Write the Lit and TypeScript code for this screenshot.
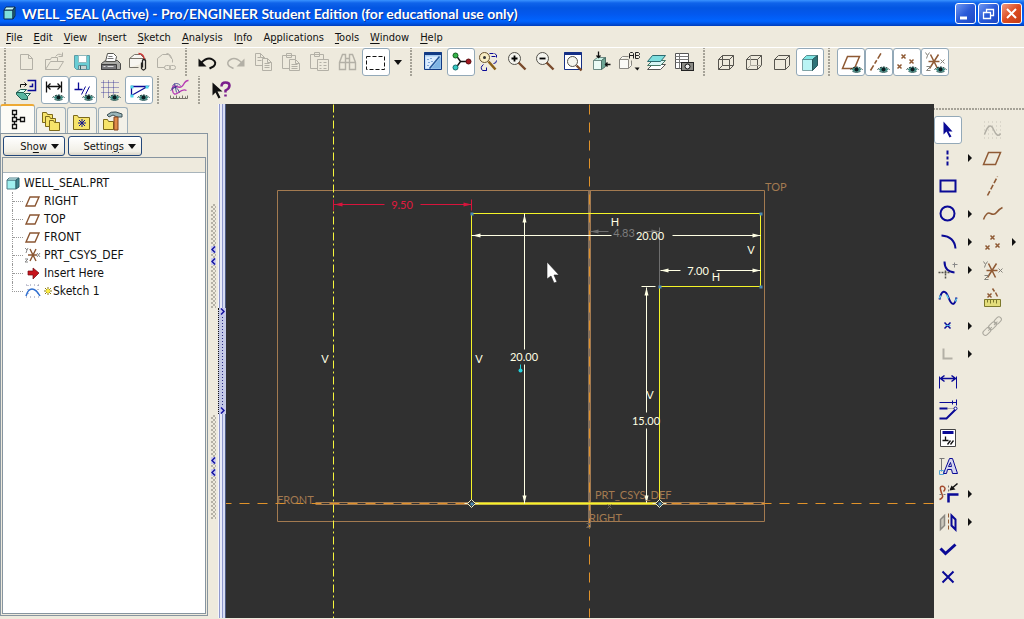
import { LitElement, html, svg, css } from "lit";
import type { TemplateResult } from "lit";
import { customElement, property } from "lit/decorators.js";
import { classMap } from "lit/directives/class-map.js";

const GREY = "#b3b0a6";
const NAVY = "#0a0a96";
const BROWN = "#8f5a34";

type Art = TemplateResult;

/* ---------- shared drawing pieces, all on a 28 x 28 grid ---------- */

const eye = (x = 12, y = 20): Art => svg`
  <g transform="translate(${x} ${y})">
    <path d="M0 0 Q5-5 10 0 Q5 5 0 0Z" fill="#3f8f86" stroke="none"/>
    <path d="M-1 0 Q5-5 11 0" stroke="#10302e" fill="none" stroke-dasharray="2 1"/>
    <circle cx="5" cy="0" r="2" fill="#0d1c20" stroke="none"/>
    <path d="M1 2 Q5 4 9 2" stroke="#2a5b58" fill="none"/>
  </g>`;

const page = (x: number, y: number, w: number, h: number, c: string, fill = "none"): Art => svg`
  <path d="M${x} ${y}h${w - 4}l4 4v${h - 4}h${-w}z" fill=${fill} stroke=${c}/>
  <path d="M${x + w - 4} ${y}v4h4" fill="none" stroke=${c}/>`;

const lens = (inner: Art): Art => svg`
  <circle cx="11" cy="10" r="6" fill="#f4f4ee" stroke="#55534c"/>
  <path d="M15 14l7 7" stroke="#7a4a2c" stroke-width="2.4"/>
  ${inner}`;

const cube = (extra: Art, c = "#57554f"): Art => svg`
  <path d="M6 11h11v10h-11zM6 11l4-4h11v10l-4 4M17 11l4-4" fill="none" stroke=${c}/>${extra}`;

const plane = (c = BROWN): Art => svg`<path d="M5 20L10 8H22L17 20Z" fill="none" stroke=${c} stroke-width="1.5"/>`;

const cross = (x: number, y: number, c = BROWN, r = 2): Art =>
  svg`<path d="M${x - r} ${y - r}l${2 * r} ${2 * r}M${x + r} ${y - r}l${-2 * r} ${2 * r}" stroke=${c} stroke-width="1.5"/>`;

const csys = (): Art => svg`
  <path d="M7 13H18M9 6L16 20M17 6L8 20" stroke=${BROWN} stroke-width="1.5"/>
  <path d="M4 4l2 3 2-3M6 7l-1 3M5 18h4l-4 4h4M19 11l4 4M23 11l-4 4" stroke="#85837c" fill="none"/>`;

const art: Record<string, Art> = {
  blank: svg`${page(7, 6, 12, 15, GREY)}`,
  open: svg`<path d="M4 21V11h5l1-2h6v4M4 21l5-8h13l-5 8zM14 8q3-4 7-1M21 4v4h-4" fill="none" stroke=${GREY}/>`,
  save: svg`<path d="M5 7h15v14h-13l-2-2z" fill="#69cdd4" stroke="#5c9aa4"/><path d="M9 7h8v7h-8z" fill="#fff" stroke="#8fb9bd"/><path d="M9 17h8v4h-8z" fill="#c9d3d2" stroke="#5c8d96"/><path d="M11 17v4" stroke="#33666e"/>`,
  print: svg`<path d="M4 15l4-3h12l3 3v6H4z" fill="#a9a9a5" stroke="#4a4a48"/><path d="M8 13l2-8h6l3 3-1 5z" fill="#fff" stroke="#55554f"/><path d="M11 8h4M10 10h6" stroke="#777"/><path d="M4 16h15v5H4z" fill="#77777a" stroke="#3c3c3c"/><path d="M6 18h2M10 18h6" stroke="#ddd"/>`,
  mail: svg`<path d="M4 19V10l5-4h6l5 5v3M4 10h16M4 19h9" fill="#f6f5f0" stroke="#77746b"/><path d="M13 5q5 0 6 6" stroke="#c33" fill="none" stroke-width="1.5"/><path d="M16 14v6q2 3 4 0v-8q-2-2-3 0v7" fill="none" stroke="#222" stroke-width="1.3"/>`,
  link: svg`<path d="M4 19v-9l5-4h6l4 5v3M4 19h7M13 5q4 0 5 5" fill="none" stroke=${GREY}/><rect x="11" y="17" width="6" height="4" rx="2" fill="none" stroke=${GREY}/><rect x="16" y="17" width="6" height="4" rx="2" fill="none" stroke=${GREY}/>`,
  undo: svg`<path d="M4 10v8h8z" fill="#111" stroke="none"/><path d="M7 14q6-6 11-3q5 3 1 7l-4 2" stroke="#111" fill="none" stroke-width="2"/>`,
  redo: svg`<path d="M22 10v8h-8z" fill=${GREY} stroke="none"/><path d="M19 14q-6-6-11-3q-5 3-1 7l4 2" stroke=${GREY} fill="none" stroke-width="1.5"/>`,
  copy: svg`${page(5, 5, 9, 12, GREY)}${page(12, 10, 9, 12, GREY, "#eeeadd")}<path d="M7 9h3M7 12h4M14 15h5M14 17h5M14 19h5" stroke=${GREY}/>`,
  paste: svg`<path d="M4 7h13v4M4 7v13h7M8 5h5v4h-5z" fill="none" stroke=${GREY}/>${page(11, 11, 10, 11, GREY)}<path d="M13 16h6M13 18h6M13 20h6" stroke=${GREY}/>`,
  special: svg`<path d="M4 6h13v5M4 6v14h7M8 4h5v4h-5z" fill="none" stroke=${GREY}/><path d="M11 11h11v11h-11z" fill="none" stroke=${GREY}/><path d="M13 14h2M17 14h3M13 17h2M17 17h3M13 20h2M17 20h3" stroke=${GREY}/>`,
  find: svg`<path d="M5 21v-7l3-8h3v15zM15 21V6h3l3 8v7zM11 10h4v4h-4M5 14h6M15 14h6" fill="none" stroke=${GREY} stroke-width="1.4"/>`,
  select: svg`<path d="M4 8h18v13H4z" fill="none" stroke="#111" stroke-dasharray="4 2"/>`,
  repaint: svg`<path d="M5 4h17v17H5z" fill="#a9cdf1" stroke="#123a84"/><path d="M6 8h15L10 20H6z" fill="#dcedff"/><path d="M21 9l-9 11h9z" fill="#7fb4e4"/><path d="M5 5h17" stroke="#123a84" stroke-width="3"/><path d="M20 8L10 20" stroke="#255799" stroke-width="1.5"/><path d="M8 11h1M11 10h1M9 14h1M12 13h1M8 17h1" stroke="#2b62ae"/>`,
  spin: svg`<path d="M8 6l5 7M8 20l5-7H20" stroke="#111" fill="none" stroke-width="1.4"/><circle cx="8" cy="7" r="2.5" fill="#36b54a" stroke="#145c20"/><circle cx="8" cy="19" r="2.5" fill="#35c8c4" stroke="#146c6a"/><circle cx="21" cy="13" r="2.5" fill="#a3161f" stroke="#5a0c10"/>`,
  orient: svg`<circle cx="9" cy="9" r="5" fill="#f7edc4" stroke="#6b5430"/><path d="M13 13l7 8" stroke="#8a6018" stroke-width="2.5"/><circle cx="9" cy="9" r="1.5" fill="#333" stroke="none"/><path d="M14 5h4M16 8h4M19 5q3 1 2 4M21 12q0 3-3 3M8 16q-4 3-1 6h4M11 19v3h-3" stroke=${NAVY} fill="none"/>`,
  zoomin: lens(svg`<path d="M8 10h6M11 7v6" stroke="#000" stroke-width="1.8"/>`),
  zoomout: lens(svg`<path d="M8 10h6" stroke="#000" stroke-width="1.8"/>`),
  refit: svg`<path d="M5 4h17v17H5z" fill="#fff" stroke="#152f86"/><path d="M5 5h17" stroke="#152f86" stroke-width="3"/><circle cx="13" cy="13" r="5" fill="#f5f5ee" stroke="#55534c"/><path d="M17 17l5 5" stroke="#7a4a2c" stroke-width="2.4"/>`,
  view: svg`<path d="M6 12h8v9H6z" fill="#eafaf5" stroke="#6d8a84"/><path d="M6 12l4-3h8l-4 3z" fill="#c6efe2" stroke="#6d8a84"/><path d="M14 12l4-3v9l-4 3z" fill="#6ea695" stroke="#4d6f67"/><path d="M11 3v6M9 7l2 2 2-2M23 16h-5M20 14l-2 2 2 2" stroke="#111" fill="none" stroke-width="1.3"/>`,
  named: svg`<path d="M4 11h9v9H4zM4 11l3-3h6M13 20l3-3v-5" fill="#fafaf6" stroke="#8a8882"/><path d="M14 10V5l1-1h2l1 1v5M14 7h4M20 4v6h3l1-1v-1l-1-1h-3M20 4h3l1 1v1l-1 1" stroke="#222" fill="none"/><path d="M19 19h5l-2 3z" fill="#111" stroke="none"/>`,
  layers: svg`<path d="M4 21l5-5h13l-5 5z" fill="#fff" stroke="#555"/><path d="M4 17l5-5h13l-5 5z" fill="#d7f5f5" stroke="#476"/><path d="M4 13l5-6h13l-5 6z" fill="#7fdede" stroke="#2d6a70"/>`,
  camera: svg`<path d="M4 5h13v15H4z" fill="#fff" stroke="#555"/><path d="M4 8h13M4 11h13M4 14h13M8 5v15" stroke="#777"/><rect x="10" y="14" width="12" height="8" fill="#8b8b86" stroke="#222"/><circle cx="16" cy="18" r="2.5" fill="#eee" stroke="#111"/>`,
  wire: cube(svg`<path d="M6 21l4-4h11M10 17V7" stroke="#57554f" fill="none"/>`),
  hidden: cube(svg`<path d="M6 21l4-4h11M10 17V7" stroke="#aaa79d" fill="none"/>`),
  nohidden: cube(svg``),
  shaded: svg`<path d="M6 11h10v11H6z" fill="#b9f4f4" stroke="#7fa3a5"/><path d="M6 11l4-4h11l-5 4z" fill="#7fe6e4" stroke="#5a8f92"/><path d="M16 11l5-4v10l-5 5z" fill="#2d7478" stroke="#28575a"/>`,
  dplane: svg`${plane()}${eye(14, 21)}`,
  daxis: svg`<path d="M5 22L16 4" stroke=${BROWN} stroke-width="1.6" stroke-dasharray="6 2 4 2"/>${eye(13, 21)}`,
  dpoint: svg`${cross(10, 8)}${cross(18, 13)}${cross(6, 18)}${eye(14, 21)}`,
  dcsys: svg`${csys()}${eye(14, 21)}`,
  sketchview: svg`<path d="M14 4h8v10h-8M16 10h3V7" fill="none" stroke=${NAVY} stroke-width="1.5"/><path d="M7 11V8h6M11 6l2 2-2 2" stroke="#111" fill="none"/><path d="M3 16l4-3h6l-3 3zM8 20l4-3h5l-3 3z" fill="#d8fff4" stroke="#1e5c50"/><path d="M3 16h7l4 4v3H8l-5-5z" fill="#57b59f" stroke="#1e5c50"/>`,
  dims: svg`<path d="M5 5v11M20 5v11M5 10h15M9 7l-3 3 3 3M16 7l3 3-3 3" stroke="#111" fill="none" stroke-width="1.3"/>${eye(12, 21)}`,
  constr: svg`<path d="M5 13h8M9 6v7" stroke=${NAVY} stroke-width="1.3"/><path d="M12 18l4-8M16 18l4-8" stroke=${NAVY}/>${eye(14, 21)}`,
  grid: svg`<path d="M6 4v17M11 4v17M16 4v17M4 6h17M4 11h17M4 16h17" stroke="#2a2a92" stroke-dasharray="1 1" stroke-width=".8"/>${eye(12, 21)}`,
  vertex: svg`<path d="M6 10H22L6 19zM6 10v9" fill="none" stroke=${NAVY} stroke-width="1.3"/><path d="M5 9h3v3H5zM20 9h3v3h-3zM5 18h3v3H5z" fill="#4fd5ea" stroke="none"/>${eye(13, 21)}`,
  curve: svg`<path d="M22 4q-3 0-5 4t-7 2-4 4 6 2 8-2" stroke="#b63cb4" fill="none" stroke-width="1.4"/><path d="M6 9q4-4 8 0M5 12q5-4 8 4M8 7l2 9M4 14l7-5" stroke="#32318c" stroke-width=".8"/><path d="M4 22h17M4 22v-3M7 22v-2M10 22v-3M13 22v-2M16 22v-3M19 22v-2M21 22v-3" stroke="#77746b"/>`,
  help: svg`<path d="M5 6v13l3-3 3 6 2-1-3-6h5z" fill="#111" stroke="none"/><path d="M14 10q0-4 4-4t4 3q0 3-4 5v2M18 18v2" fill="none" stroke="#7a1d8c" stroke-width="2.5"/>`,

  arrow: svg`<path d="M9 5v13l3-3 3 6 2-1-3-5h4z" fill=${NAVY} stroke="none"/>`,
  line: svg`<path d="M13 6v17" stroke=${NAVY} stroke-width="2" stroke-dasharray="4 2 3 2"/>`,
  rect: svg`<path d="M6 8h15v11H6z" stroke=${NAVY} fill="none" stroke-width="2"/>`,
  circle: svg`<circle cx="13" cy="13" r="7" stroke=${NAVY} fill="none" stroke-width="2"/>`,
  arc: svg`<path d="M7 7q13 1 14 13" stroke=${NAVY} fill="none" stroke-width="2"/>`,
  fillet: svg`<path d="M10 5q0 10 10 11" stroke=${NAVY} fill="none" stroke-width="2"/><path d="M4 16h12M11 14v8" stroke="#55534c" stroke-width="1.5" stroke-dasharray="2 1"/><path d="M18 8h5M20 6v5" stroke="#888"/>`,
  spline: svg`<path d="M5 15C7 5 11 5 14 13S20 22 22 13" stroke=${NAVY} fill="none" stroke-width="2"/><path d="M5 14l1-3M12 10l2 4M21 17l1-3" stroke="#5fd5ee" stroke-width="1.5"/>`,
  point: svg`${cross(13, 13, NAVY, 3)}<path d="M11 13h5" stroke="#4ab6e8"/>`,
  edge: svg`<path d="M9 8v10h9" stroke=${GREY} fill="none" stroke-width="2"/>`,
  dim: svg`<path d="M5 8v12M22 8v12" stroke=${NAVY}/><path d="M6 10h15M10 7l-4 3 4 3M17 7l4 3-4 3" stroke=${NAVY} fill="none" stroke-width="1.5"/>`,
  modify: svg`<path d="M5 6h17M22 3v6M18 4v4" stroke=${NAVY}/><path d="M5 12h8M5 22h7l9-9" stroke=${NAVY} fill="none" stroke-width="2"/><path d="M13 12h7" stroke="#777" stroke-dasharray="1 1"/><circle cx="21" cy="12" r="1.5" fill="#fff" stroke=${NAVY}/>`,
  impose: svg`<path d="M6 5h15v17H6z" fill="#fff" stroke="#444"/><path d="M8 8h11" stroke=${NAVY} stroke-width="3"/><path d="M8 16h6M11 12v4M13 20l3-4M16 20l3-4" stroke="#111" stroke-width="1.3"/>`,
  text: svg`<path d="M5 6h5M7 6v13" stroke="#777"/><path d="M5 18h4v4H5z" stroke="#55a5d5" fill="none"/><path d="M9 21l6-15h3l5 15h-5l-1-4h-4l-1 4zM14 14h3l-1-4z" fill="#d5d5ee" stroke=${NAVY}/>`,
  trim: svg`<path d="M9 6q-4-1-3 3t2 6-3 4M9 6q3 2 0 5" stroke="#a34a2d" fill="none" stroke-width="1.5"/><path d="M14 22v-8h10" stroke=${NAVY} fill="none" stroke-width="2.5"/><path d="M5 14h8M14 5v7" stroke="#777" stroke-dasharray="2 2"/><path d="M23 3l-7 6" stroke="#111" stroke-width="1.5"/><path d="M15 10l2-5 4 4z" fill="#111" stroke="none"/>`,
  mirror: svg`<path d="M6 11l4-4v10l-4 4z" stroke="#8a8882" fill="#ccc9bd" stroke-width="1.5"/><path d="M17 7l4 4v10l-4-4z" fill="none" stroke=${NAVY} stroke-width="2"/><path d="M14 5v18" stroke=${BROWN} stroke-dasharray="4 2"/>`,
  done: svg`<path d="M6 12l5 5L21 8" stroke=${NAVY} fill="none" stroke-width="3"/>`,
  quit: svg`<path d="M8 7l11 11M19 7L8 18" stroke=${NAVY} stroke-width="2"/>`,

  sketch: svg`<path d="M6 5v17M10 5v17M14 5v17M18 5v17M22 5v17" stroke="#c9c5b8" stroke-dasharray="1 3"/><path d="M6 18q5-14 9-5t7 4" stroke=${GREY} fill="none" stroke-width="1.5"/>`,
  rplane: plane(),
  raxis: svg`<path d="M9 23L19 4" stroke=${BROWN} stroke-width="1.6" stroke-dasharray="5 2"/>`,
  rcurve: svg`<path d="M5 19q3-8 7-6t6-1 6-5" stroke=${BROWN} fill="none" stroke-width="1.5"/>`,
  rpoint: svg`${cross(14, 9)}${cross(19, 17)}${cross(9, 19)}`,
  rcsys: svg`<g transform="translate(1 1)">${csys()}</g>`,
  ranalysis: svg`<path d="M6 15h16v7H6z" fill="#e3dd7b" stroke="#7c782c"/><path d="M9 15v3M12 15v4M15 15v3M18 15v4" stroke="#7c782c"/>${cross(11, 11)}<path d="M14 4l2 3M17 8l2 4" stroke=${BROWN} stroke-width="1.5"/>`,
  rchain: svg`<g fill="none" stroke="#aba89e" transform="rotate(-45 14 14)"><rect x="2" y="11" width="9" height="5" rx="2.5"/><rect x="10" y="11" width="9" height="5" rx="2.5"/><rect x="18" y="11" width="8" height="5" rx="2.5"/><path d="M8 14h5M16 14h5"/></g>`,
};

const glyph = (a: Art) => html`<svg class="glyph" viewBox="0 0 28 28" aria-hidden="true"><g transform="translate(.5 .5)">${a}</g></svg>`;

/* ---------- tool button ---------- */

@customElement("tool-button")
class ToolButton extends LitElement {
  @property() icon = "blank";
  @property() label = "";
  @property({ type: Boolean }) on = false;

  static styles = css`
    :host { display: block; flex: none; }
    .btn { display: block; box-sizing: border-box; width: 28px; height: 28px; padding: 0; border: 1px solid transparent; border-radius: 3px; background: none; }
    .on { background: #fff; border-color: #93a9b8; }
    .glyph { display: block; width: 28px; height: 28px; margin: -1px; fill: none; }
  `;

  render() {
    return html`<button type="button" class=${classMap({ btn: true, on: this.on })} aria-label=${this.label} aria-pressed=${this.on}>${glyph(art[this.icon])}</button>`;
  }
}

/* ---------- drawing area ---------- */

@customElement("sketch-canvas")
class SketchCanvas extends LitElement {
  static styles = css`
    :host { display: block; flex: 1; min-width: 0; background: #303030; overflow: hidden; }
    .view { display: block; width: 100%; height: 100%; fill: none; stroke-width: 1; }
    .datum { stroke: #a37a50; }
    .axis { stroke: #e0922a; stroke-dasharray: 10 8; }
    .center { stroke: #f6f63c; stroke-dasharray: 8 3 2 3; }
    .geom { stroke: #f4f428; }
    .dim { stroke: #ffffe4; }
    .weak { stroke: #6e6e6e; }
    .sel { stroke: #d8143c; }
    .txt { font: 11px Lato, "Liberation Sans", sans-serif; fill: #ffffe4; stroke: none; }
    .tdatum { fill: #a37a50; }
    .tweak { fill: #7c7c7c; }
    .tsel { fill: #e0183f; }
    .mid { text-anchor: middle; }
  `;

  private tip(x: number, y: number, a: number, c: string) {
    return svg`<g transform="translate(${x} ${y}) rotate(${a})"><path d="M0 0L8-2V2Z" fill=${c} stroke="none"/></g>`;
  }

  render() {
    const W = "#ffffe4", R = "#d8143c", G = "#6e6e6e";
    return html`
      <svg class="view" viewBox="226 104 708 514" preserveAspectRatio="xMidYMid slice" role="img" aria-label="Sketch">
        <g transform="translate(.5 .5)">
          <path class="datum" d="M277 190H764V521H277Z"/>
          <path d="M589 190V527" stroke="#85705c" stroke-width="3"/>
          <path class="datum" d="M590 190V521M315 504H764M315 502H764"/>
          <path class="axis" d="M589 122V617M589 104V114"/>
          <path class="axis" d="M221 503H934"/>
          <path class="center" d="M333 104V618"/>

          <path class="geom" d="M471 503V213H760V286H659V503"/>
          <path class="geom" d="M471 503H659" stroke-width="2"/>

          <path class="sel" d="M333 204H384M420 204H471M333 199V210M471 199V210"/>
          ${this.tip(334, 204, 0, R)}${this.tip(471, 204, 180, R)}

          <path class="weak" d="M590 231H608M643 231H659M659 227V286"/>
          ${this.tip(590, 231, 0, G)}${this.tip(659, 231, 180, G)}

          <path class="dim" d="M471 235H611M672 235H760M524 213V349M524 364V503M660 270H680M716 270H760M646 287V412M646 428V502M641 286H655"/>
          ${this.tip(472, 235, 0, W)}${this.tip(760, 235, 180, W)}
          ${this.tip(524, 214, 90, W)}${this.tip(524, 503, 270, W)}
          ${this.tip(660, 270, 0, W)}${this.tip(760, 270, 180, W)}
          ${this.tip(646, 287, 90, W)}${this.tip(646, 503, 270, W)}

          <g fill="#303030" stroke="#f2f2c8">
            <path d="M471 499l4 4-4 4-4-4zM659 499l4 4-4 4-4-4z"/>
            <path d="M464 503h3M475 503h3M652 503h3M663 503h3"/>
          </g>
          <g fill="#4c8ab4">
            <path d="M470 212h3v3h-3zM759 212h3v3h-3zM759 285h3v3h-3zM658 285h3v3h-3zM470 502h3v3h-3zM658 502h3v3h-3z"/>
          </g>
          <path d="M520 364V370" stroke="#22d0dc"/><circle cx="520" cy="370" r="2" fill="#22d0dc"/>
          <path d="M586 523h4l-4 4h4M607 504l4 4M611 504l-4 4" stroke="#6a6258"/>
        </g>

        <text class="txt tsel mid" x="402" y="209">9.50</text>
        <text class="txt tweak mid" x="624" y="237">4.83</text>
        <text class="txt mid" x="650" y="240">20.00</text>
        <text class="txt mid" x="524" y="361">20.00</text>
        <text class="txt mid" x="698" y="275">7.00</text>
        <text class="txt mid" x="646" y="425">15.00</text>
        <text class="txt mid" x="615" y="226">H</text>
        <text class="txt mid" x="716" y="281">H</text>
        <text class="txt mid" x="751" y="254">V</text>
        <text class="txt mid" x="479" y="363">V</text>
        <text class="txt mid" x="325" y="363">V</text>
        <text class="txt mid" x="650" y="399">V</text>
        <text class="txt tdatum" x="765" y="191">TOP</text>
        <text class="txt tdatum" x="277" y="504">FRONT</text>
        <text class="txt tdatum" x="595" y="499">PRT_CSYS_DEF</text>
        <text class="txt tdatum" x="589" y="522">RIGHT</text>

        <path d="M547 262V279L551 276L554 283L557 282L554 275H559Z" fill="#fff" stroke="#222" stroke-width=".6"/>
      </svg>`;
  }
}

/* ---------- model tree panel ---------- */

@customElement("model-tree")
class ModelTree extends LitElement {
  static styles = css`
    :host { display: flex; flex-direction: column; flex: none; width: 208px; padding-bottom: 2px; box-sizing: border-box; font: 12px "DejaVu Sans Condensed", "DejaVu Sans", sans-serif; font-stretch: condensed; color: #111; }
    .tabs { display: flex; align-items: flex-end; gap: 1px; height: 29px; }
    .tab { box-sizing: border-box; width: 30px; height: 26px; padding: 0; border: 1px solid #9fb0bb; border-bottom: 0; border-radius: 3px 3px 0 0; background: #f3f1e8; display: grid; place-items: center; }
    .current { width: 35px; height: 29px; background: #fcfbf6; border-top: 2px solid #eda934; }
    .pic { display: block; width: 22px; height: 22px; fill: none; }
    .panel { flex: 1; min-height: 0; display: flex; flex-direction: column; gap: 1px; border: 1px solid #8795a0; padding: 2px 1px 1px; }
    .bar { display: flex; gap: 3px; padding-left: 1px; }
    .menu { box-sizing: border-box; height: 20px; width: 62px; padding: 0 5px 0 0; display: flex; align-items: center; justify-content: flex-end; gap: 4px; border: 1px solid #24487a; border-radius: 3px; background: linear-gradient(#fff, #f1efe6 80%, #d9d5c8); font: inherit; font-size: 11px; color: inherit; }
    .wide { width: 74px; }
    .caret { width: 0; height: 0; border: 4px solid transparent; border-top: 5px solid #111; border-bottom: 0; }
    .box { flex: 1; min-height: 0; display: flex; flex-direction: column; border: 1px solid #8795a0; background: #fff; }
    .head { flex: none; height: 14px; background: #eeeadd; border-bottom: 1px solid #a8b4bb; }
    .list { list-style: none; margin: 0; padding: 1px 0 0 2px; }
    .item { display: flex; align-items: center; height: 18px; gap: 3px; }
    .ico { flex: none; display: block; width: 16px; height: 16px; fill: none; }
    .sub { list-style: none; margin: 0; padding: 0 0 0 7px; }
    .child { display: flex; align-items: stretch; height: 18px; }
    .branch { display: block; flex: none; width: 10px; height: 9px; border-bottom: 1px dotted #999; }
    .stem { flex: none; width: 12px; border-left: 1px dotted #999; }
    .last { border-left-color: transparent; }
    .last .branch { border-left: 1px dotted #999; margin-left: -1px; }
    .node { display: flex; align-items: center; gap: 3px; }
    .star { flex: none; width: 8px; height: 8px; margin-right: -2px; }
    u { text-underline-offset: 2px; }
  `;

  private plane = svg`<path d="M1 13L5 4H14L10 13Z" stroke="#8a5632" stroke-width="1.4"/>`;

  render() {
    const folder = (x: number, y: number, w = 10, h = 8) =>
      svg`<path d="M${x} ${y}h4l1 2h${w - 5}v${h}h${-w}z" fill="#f7e46a" stroke="#7d6a1a"/>`;
    const rows: [Art, string, boolean][] = [
      [this.plane, "RIGHT", false],
      [this.plane, "TOP", false],
      [this.plane, "FRONT", false],
      [svg`<path d="M3 8H12M5 2L11 14M11 2L5 14" stroke="#8a5632" stroke-width="1.4"/><path d="M0 1l2 2 1-2M2 3l-1 3M0 12h3l-3 3h3M12 6l3 4M15 6l-3 4" stroke="#888"/>`, "PRT_CSYS_DEF", false],
      [svg`<path d="M3 6h5V3l6 5-6 6v-4H3z" fill="#c8141c" stroke="#6d0a10" stroke-width=".7"/>`, "Insert Here", false],
      [svg`<path d="M1 2h14M1 14h14M3 2v12M13 2v12" stroke="#8a8aa5" stroke-dasharray="1 3"/><path d="M1 13q2-7 6-7t8 7" stroke="#2f6fd0" stroke-width="1.5"/>`, "Sketch 1", true],
    ];
    return html`
      <div class="tabs" role="tablist">
        <button class="tab current" role="tab" aria-selected="true" aria-label="Model Tree"><svg class="pic" viewBox="0 0 22 22"><path d="M6 3h4v4H6zM6 10h4v4H6zM6 17h4v4H6zM14 10h4v4h-4zM8 7v3M8 14v3M10 12h4" stroke="#111" stroke-width="1.3" transform="translate(-.5 -1.5)"/></svg></button>
        <button class="tab" role="tab" aria-label="Folder Browser"><svg class="pic" viewBox="0 0 22 22">${folder(2.5, 2.5)}${folder(5.5, 6.5)}${folder(9.5, 10.5)}</svg></button>
        <button class="tab" role="tab" aria-label="Favorites"><svg class="pic" viewBox="0 0 22 22">${folder(2.5, 5.5, 16, 12)}<path d="M7 13h8M11 9v8M8 10l6 6M14 10l-6 6" stroke="#14148c"/></svg></button>
        <button class="tab" role="tab" aria-label="Connections"><svg class="pic" viewBox="0 0 22 22">${folder(1.5, 9.5, 10, 8)}<path d="M5 5q4-4 9-3l6 2v3h-5l-4-2-4 2z" fill="#9ab6ba" stroke="#3d5054"/><path d="M12 7h4v13h-4z" fill="#e08b4a" stroke="#84431c"/></svg></button>
      </div>
      <div class="panel">
        <div class="bar">
          <button class="menu" type="button"><span>Sh<u>o</u>w</span><i class="caret"></i></button>
          <button class="menu wide" type="button"><span>Settin<u>g</u>s</span><i class="caret"></i></button>
        </div>
        <div class="box">
          <div class="head"></div>
          <ul class="list">
            <li>
              <div class="item"><svg class="ico" viewBox="0 0 16 16"><path d="M2 5h9v9H2z" fill="#9ff0f0" stroke="#4f7f88"/><path d="M2 5l2-2h10l-3 2z" fill="#e2ffff" stroke="#4f7f88"/><path d="M11 5l3-2v9l-3 2z" fill="#3f8790" stroke="#2d5f68"/></svg>WELL_SEAL.PRT</div>
              <ul class="sub">
                ${rows.map(([pic, name, fresh]) => html`
                  <li class="child">
                    <span class=${classMap({ stem: true, last: fresh })}><span class="branch"></span></span>
                    <span class="node"><svg class="ico" viewBox="0 0 16 16">${pic}</svg>${fresh ? html`<svg class="star" viewBox="0 0 8 8"><path d="M4 0v8M0 4h8M1 1l6 6M7 1L1 7" stroke="#8a7a12"/><circle cx="4" cy="4" r="2" fill="#ffee3a"/></svg>` : ""}<span>${name}</span></span>
                  </li>`)}
              </ul>
            </li>
          </ul>
        </div>
      </div>`;
  }
}

/* ---------- application ---------- */

const MENUS: [string, string, string][] = [
  ["", "F", "ile"], ["", "E", "dit"], ["", "V", "iew"], ["", "I", "nsert"], ["", "S", "ketch"], ["", "A", "nalysis"],
  ["I", "n", "fo"], ["A", "p", "plications"], ["", "T", "ools"], ["", "W", "indow"], ["", "H", "elp"],
];

/* Each entry is an icon key and its label; "|" is a grip, "v" a drop-down arrow, and a "*" prefix means pressed. */
const ROW1 = ["|", "blank:New", "open:Open", "save:Save", "print:Print", "mail:Send", "link:Send link", "|", "undo:Undo", "redo:Redo", "copy:Copy", "paste:Paste", "special:Paste Special", "find:Find", "*select:Select", "v", "|", "repaint:Repaint", "*spin:Spin Center", "orient:Orient Mode", "zoomin:Zoom In", "zoomout:Zoom Out", "refit:Refit", "view:Reorient", "named:Saved Views", "layers:Layers", "camera:View Manager", "|", "wire:Wireframe", "hidden:Hidden Line", "nohidden:No Hidden", "*shaded:Shading", "|", "*dplane:Plane Display", "*daxis:Axis Display", "*dpoint:Point Display", "*dcsys:Csys Display"];
const ROW2 = ["|", "sketchview:Sketch View", "*dims:Display Dimensions", "*constr:Display Constraints", "grid:Display Grid", "*vertex:Display Vertices", "|", "curve:Curvature", "|", "help:What's This"];

/* Sketcher tools and datum tools; a trailing ">" adds a flyout arrow. */
const LEFT_TOOLS = ["*arrow:Select", "line:Line>", "rect:Rectangle", "circle:Circle>", "arc:Arc>", "fillet:Fillet>", "spline:Spline", "point:Point>", "edge:Use Edge>", "dim:Dimension", "modify:Modify", "impose:Constraints", "text:Text", "trim:Trim>", "mirror:Mirror>", "done:Done", "quit:Quit"];
const RIGHT_TOOLS = ["sketch:Sketch", "rplane:Datum Plane", "raxis:Datum Axis", "rcurve:Datum Curve", "rpoint:Datum Point>", "rcsys:Coordinate System", "ranalysis:Analysis", "rchain:Reference"];

@customElement("app-root")
class AppRoot extends LitElement {
  static styles = css`
    :host { display: flex; flex-direction: column; height: 100vh; overflow: hidden; background: #eeeadd; color: #111; font: 11px "DejaVu Sans Condensed", "DejaVu Sans", sans-serif; font-stretch: condensed; }
    .title { flex: none; display: flex; align-items: center; gap: 6px; height: 26px; box-sizing: border-box; padding: 0 2px 0 3px; background: linear-gradient(#3a93ff 0, #0f63ea 3px, #0356e2 8px, #0358ee 14px, #0064ff 21px, #0058ea 23px, #003dbb 26px); }
    .appicon { flex: none; width: 13px; height: 14px; }
    .name { flex: 1; min-width: 0; margin: 0; font: bold 14px Lato, "Liberation Sans", sans-serif; color: #fff; white-space: nowrap; text-shadow: 1px 1px #0a318f; }
    .wins { display: flex; gap: 2px; }
    .win { box-sizing: border-box; width: 21px; height: 21px; padding: 0; border: 1px solid #fff; border-radius: 3px; background: linear-gradient(135deg, #6f98f2, #2a5ad8 50%, #1d48c4); }
    .close { background: linear-gradient(135deg, #f09a80, #dd4c22 50%, #c33c14); }
    .wpic { display: block; width: 19px; height: 19px; fill: none; stroke: #fff; stroke-width: 2; }
    .menus { flex: none; display: flex; gap: 11px; height: 21px; padding-left: 6px; border-bottom: 1px solid #fff; }
    .menu { padding: 1px 0 0; border: 0; background: none; font: inherit; color: inherit; }
    u { text-underline-offset: 2px; }
    .row { flex: none; display: flex; height: 28px; }
    .grip { flex: none; width: 13px; background: radial-gradient(circle at 1px 1px, #a5a297 1px, transparent 1px) 4px 2px / 3px 3px repeat-y; }
    .drop { flex: none; width: 16px; padding: 0; border: 0; background: none; display: grid; place-items: center; }
    .down { border: 4px solid transparent; border-top: 5px solid #111; border-bottom: 0; }
    .main { flex: 1; min-height: 0; display: flex; padding-bottom: 1px; }
    .split { flex: none; width: 10px; display: flex; flex-direction: column; justify-content: center; align-items: center; gap: 107px; }
    .handle { width: 5px; height: 104px; display: flex; flex-direction: column; justify-content: center; gap: 5px; background: conic-gradient(#b5b1a6 25%, #eeeadd 0 50%, #b5b1a6 0 75%, #eeeadd 0) 0 0 / 4px 4px; }
    .chev { display: block; width: 5px; height: 7px; background: #c9c9ee; fill: none; stroke: #1414a0; stroke-width: 1.5; }
    .rail { flex: none; width: 8px; display: flex; flex-direction: column; justify-content: center; box-sizing: border-box; background: linear-gradient(90deg, #f5f5fa 1px, #8f98cc 1px 2px, #e9ebf8 2px 4px, #8f98cc 4px 5px, #d6dcf4 5px 7px, #4d5a82 7px); }
    .expand { box-sizing: border-box; height: 106px; display: flex; flex-direction: column; align-items: center; justify-content: space-between; border-left: 1px dotted #111; background: linear-gradient(#2a2a86 50%, transparent 0) 3px 0 / 1px 3px repeat-y, #c3c8e6; }
    .tools { flex: none; display: grid; grid-template-columns: 44px 46px; align-content: start; }
    .col { display: flex; flex-direction: column; }
    .top { height: 12px; background: radial-gradient(circle at 1px 1px, #a5a297 1px, transparent 1px) 2px 4px / 3px 3px repeat-x; }
    .tool { display: flex; height: 28px; }
    .fly { flex: none; width: 16px; padding: 0; border: 0; background: none; display: grid; place-items: center; }
    .right { border: 4px solid transparent; border-left: 4px solid #111; border-right: 0; }
  `;

  private item(spec: string) {
    if (spec === "|") return html`<span class="grip"></span>`;
    if (spec === "v") return html`<button class="drop" type="button" aria-label="Selection filter"><i class="down"></i></button>`;
    const on = spec.startsWith("*");
    const [icon, label] = spec.replace("*", "").split(":");
    return html`<tool-button .icon=${icon} .label=${label} .on=${on}></tool-button>`;
  }

  private column(list: string[]) {
    return html`<div class="col">
      <span class="top"></span>
      ${list.map((s) => html`<div class="tool">${this.item(s.replace(">", ""))}${s.endsWith(">") ? html`<button class="fly" type="button" aria-label="More"><i class="right"></i></button>` : ""}</div>`)}
    </div>`;
  }

  private chev(d: string) {
    return html`<svg class="chev" viewBox="0 0 5 7"><path d=${d}/></svg>`;
  }

  render() {
    const left = "M4 .5L1 3.5L4 6.5";
    const right = "M1 .5L4 3.5L1 6.5";
    const handle = html`<div class="handle">${this.chev(left)}${this.chev(left)}</div>`;
    return html`
      <header class="title">
        <svg class="appicon" viewBox="0 0 13 14"><path d="M1 4h9v9H1z" fill="#7fe0dc" stroke="#0c2c50"/><path d="M1 4l2-3h9l-2 3z" fill="#c9fffa" stroke="#0c2c50"/><path d="M10 4l2-3v9l-2 3z" fill="#2a7c7c" stroke="#0c2c50"/></svg>
        <h1 class="name">WELL_SEAL (Active) - Pro/ENGINEER Student Edition (for educational use only)</h1>
        <div class="wins">
          <button class="win" aria-label="Minimize"><svg class="wpic" viewBox="0 0 19 19"><path d="M4 14h7" stroke-width="3"/></svg></button>
          <button class="win" aria-label="Restore"><svg class="wpic" viewBox="0 0 19 19"><path d="M4.5 8.5h7v6h-7zM7.5 8V5.5h7v6H12" stroke-width="1.3"/></svg></button>
          <button class="win close" aria-label="Close"><svg class="wpic" viewBox="0 0 19 19"><path d="M5 5l9 9M14 5l-9 9"/></svg></button>
        </div>
      </header>
      <nav class="menus">${MENUS.map(([a, b, c]) => html`<button class="menu" type="button">${a}<u>${b}</u>${c}</button>`)}</nav>
      <div class="row" role="toolbar">${ROW1.map((s) => this.item(s))}</div>
      <div class="row" role="toolbar">${ROW2.map((s) => this.item(s))}</div>
      <main class="main">
        <model-tree></model-tree>
        <div class="split">${handle}${handle}</div>
        <div class="rail"><div class="expand">${this.chev(right)}${this.chev(right)}</div></div>
        <sketch-canvas></sketch-canvas>
        <aside class="tools">${this.column(LEFT_TOOLS)}${this.column(RIGHT_TOOLS)}</aside>
      </main>`;
  }
}
